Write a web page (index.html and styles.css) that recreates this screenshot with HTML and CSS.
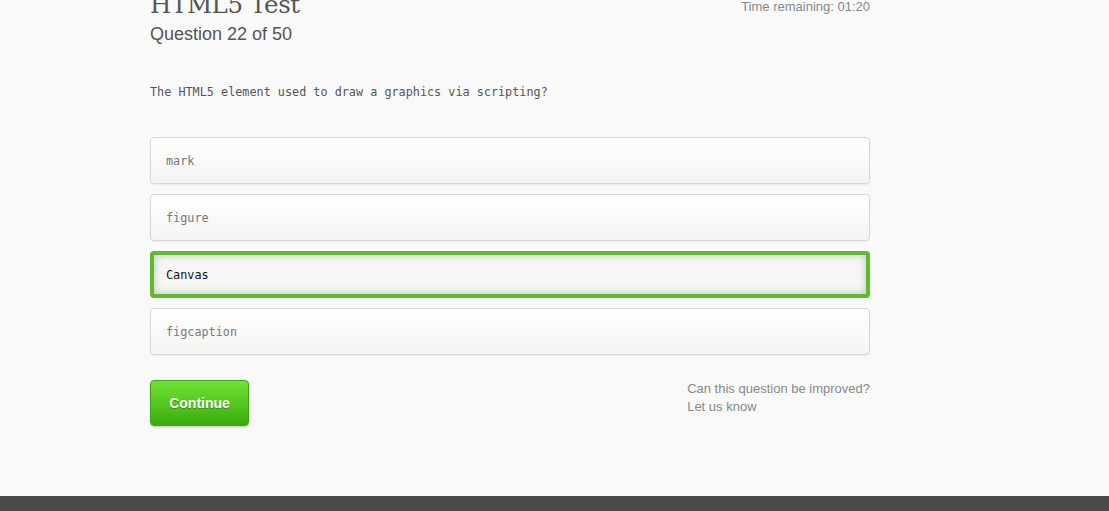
FILE: index.html
```html
<!DOCTYPE html>
<html>
<head>
<meta charset="utf-8">
<link rel="stylesheet" href="styles.css">
</head>
<body>
<div class="page">
  <div class="quiz">
    <header class="quiz-head">
      <div class="titles">
        <h1 class="test-title">HTML5 Test</h1>
        <h2 class="q-count">Question 22 of 50</h2>
      </div>
      <div class="timer">Time remaining: 01:20</div>
    </header>
    <p class="question">The HTML5 element used to draw a graphics via scripting?</p>
    <ul class="options">
      <li class="option">mark</li>
      <li class="option">figure</li>
      <li class="option selected">Canvas</li>
      <li class="option">figcaption</li>
    </ul>
    <div class="actions">
      <button class="btn-continue">Continue</button>
      <div class="feedback">
        <div>Can this question be improved?</div>
        <div>Let us know</div>
      </div>
    </div>
  </div>
  <footer class="footer"></footer>
</div>
</body>
</html>
```
FILE: styles.css
```css
html, body {
  margin: 0;
  padding: 0;
  background: #f9f9f9;
  height: 100%;
  overflow: hidden;
}
.page {
  display: flex;
  flex-direction: column;
  min-height: 100%;
}
.quiz {
  width: 720px;
  margin-left: 150px;
  margin-top: -10px;
  flex: 1;
}
.quiz-head {
  display: flex;
  justify-content: space-between;
  align-items: flex-start;
}
.test-title {
  margin: 0;
  font-family: "DejaVu Serif", "Liberation Serif", serif;
  font-weight: normal;
  font-size: 24.5px;
  line-height: 30px;
  color: #555;
  letter-spacing: -0.4px;
}
.q-count {
  margin: 3px 0 0;
  font-family: "Liberation Sans", Arial, sans-serif;
  font-weight: normal;
  font-size: 18px;
  line-height: 22px;
  color: #555;
}
.timer {
  margin-top: 9px;
  font-family: "Liberation Sans", Arial, sans-serif;
  font-size: 13px;
  line-height: 16px;
  color: #888;
}
.question {
  margin: 39px 0 0;
  font-family: "DejaVu Sans Mono", "Liberation Mono", monospace;
  font-size: 11.8px;
  line-height: 16px;
  color: #555;
}
.options {
  list-style: none;
  margin: 37px 0 0;
  padding: 0;
  display: flex;
  flex-direction: column;
  gap: 10px;
}
.option {
  box-sizing: border-box;
  height: 47px;
  display: flex;
  align-items: center;
  padding: 0 15px;
  border: 1px solid #d6d6de;
  border-radius: 4px;
  background: linear-gradient(#ffffff, #f4f4f2);
  box-shadow: 0 1px 2px rgba(0,0,0,0.06);
  font-family: "DejaVu Sans Mono", "Liberation Mono", monospace;
  font-size: 11.8px;
  color: #777;
}
.option.selected {
  border: 4px solid #5dbb2e;
  padding: 0 12px;
  color: #111;
  background: #f6f6f4;
  box-shadow: inset 0 0 8px rgba(0,0,0,0.22);
}
.actions {
  margin-top: 25px;
  display: flex;
  justify-content: space-between;
  align-items: flex-start;
}
.btn-continue {
  width: 99px;
  height: 46px;
  border: 1px solid #3da414;
  border-radius: 4px;
  background: linear-gradient(#72e234, #3aad0e);
  box-shadow: 0 1px 2px rgba(0,0,0,0.2);
  color: #fff;
  font-family: "Liberation Sans", Arial, sans-serif;
  font-weight: bold;
  font-size: 14px;
  text-shadow: 0 1px 1px rgba(0,0,0,0.3);
  cursor: pointer;
  padding: 0;
}
.feedback {
  margin-top: 0;
  white-space: nowrap;
  font-family: "Liberation Sans", Arial, sans-serif;
  font-size: 13px;
  line-height: 18px;
  color: #888;
}
.footer {
  height: 15px;
  background: #4a4a4a;
}
```
